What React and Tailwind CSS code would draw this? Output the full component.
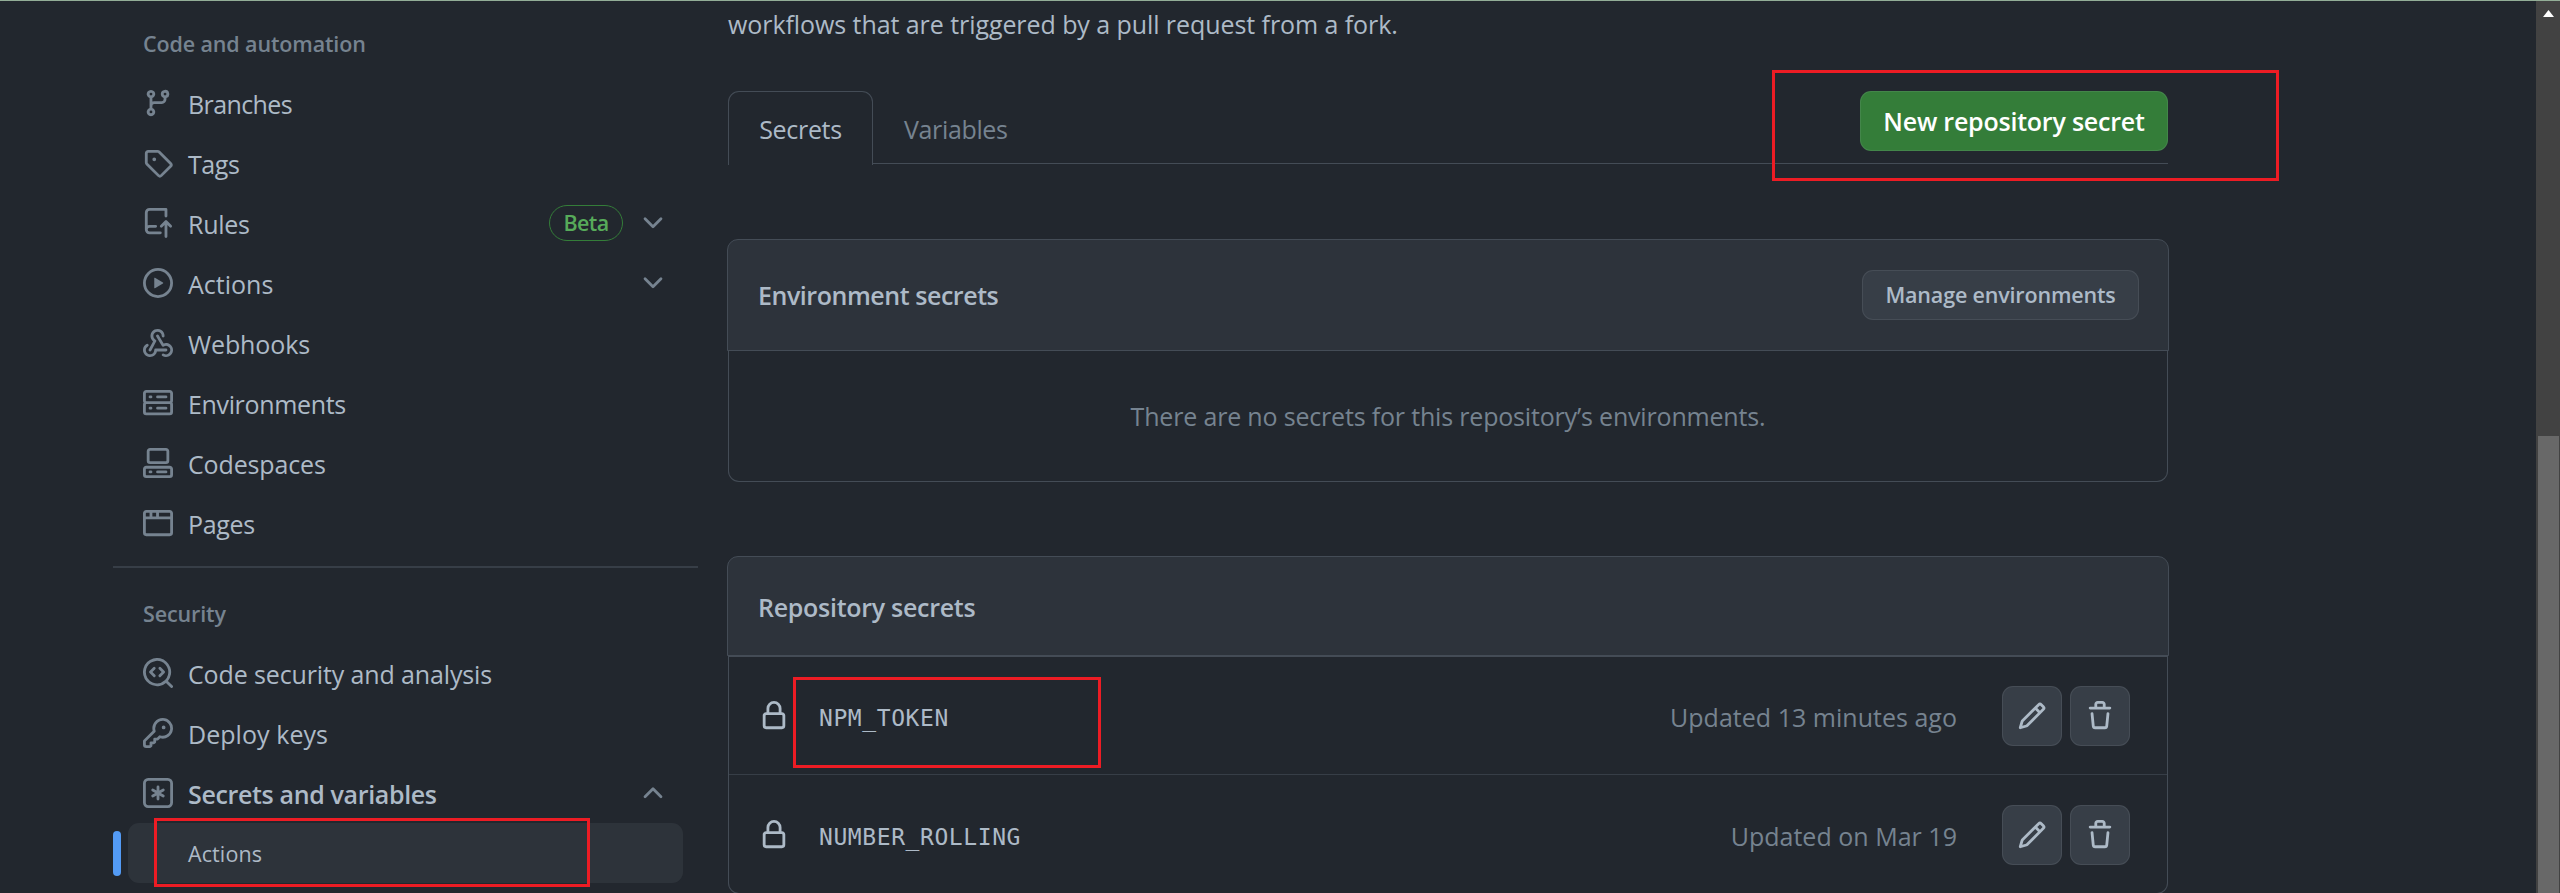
const icons = {
    branch: ['M9.5 3.25a2.25 2.25 0 1 1 3 2.122V6A2.5 2.5 0 0 1 10 8.5H6a1 1 0 0 0-1 1v1.128a2.251 2.251 0 1 1-1.5 0V5.372a2.25 2.25 0 1 1 1.5 0v1.836A2.493 2.493 0 0 1 6 7h4a1 1 0 0 0 1-1v-.628A2.25 2.25 0 0 1 9.5 3.25Zm-6 0a.75.75 0 1 0 1.5 0 .75.75 0 0 0-1.5 0Zm8.25-.75a.75.75 0 1 0 0 1.5.75.75 0 0 0 0-1.5ZM4.25 12a.75.75 0 1 0 0 1.5.75.75 0 0 0 0-1.5Z'],
    tag: ['M1 7.775V2.75C1 1.784 1.784 1 2.75 1h5.025c.464 0 .91.184 1.238.513l6.25 6.25a1.75 1.75 0 0 1 0 2.474l-5.026 5.026a1.75 1.75 0 0 1-2.474 0l-6.25-6.25A1.752 1.752 0 0 1 1 7.775Zm1.5 0c0 .066.026.13.073.177l6.25 6.25a.25.25 0 0 0 .354 0l5.025-5.025a.25.25 0 0 0 0-.354l-6.25-6.25a.25.25 0 0 0-.177-.073H2.75a.25.25 0 0 0-.25.25ZM6 5a1 1 0 1 1 0 2 1 1 0 0 1 0-2Z'],
    repoPush: ['M1 2.5A2.5 2.5 0 0 1 3.5 0h8.75a.75.75 0 0 1 .75.75v3.5a.75.75 0 0 1-1.5 0V1.5h-8a1 1 0 0 0-1 1v6.708A2.493 2.493 0 0 1 3.5 9h3.25a.75.75 0 0 1 0 1.5H3.5a1 1 0 0 0 0 2h5.75a.75.75 0 0 1 0 1.5H3.5A2.5 2.5 0 0 1 1 11.5Zm13.23 7.79h-.001l-1.224-1.224v6.184a.75.75 0 0 1-1.5 0V9.066L10.28 10.29a.75.75 0 0 1-1.06-1.061l2.505-2.504a.75.75 0 0 1 1.06 0L15.29 9.23a.751.751 0 0 1-.018 1.042.751.751 0 0 1-1.042.018Z'],
    play: ['M8 0a8 8 0 1 1 0 16A8 8 0 0 1 8 0ZM1.5 8a6.5 6.5 0 1 0 13 0 6.5 6.5 0 0 0-13 0Zm4.879-2.773 4.264 2.559a.25.25 0 0 1 0 .428l-4.264 2.559A.25.25 0 0 1 6 10.559V5.442a.25.25 0 0 1 .379-.215Z'],
    webhook: [
        'M5.5 4.25a2.25 2.25 0 0 1 4.5 0 .75.75 0 0 0 1.5 0 3.75 3.75 0 1 0-6.14 2.889l-2.272 4.258a.75.75 0 0 0 1.324.706L7 7.25a.75.75 0 0 0-.309-1.015A2.25 2.25 0 0 1 5.5 4.25Z',
        'M7.364 3.607a.75.75 0 0 1 1.03.257l2.608 4.349a3.75 3.75 0 1 1-.628 6.785.75.75 0 0 1 .752-1.299 2.25 2.25 0 1 0-.033-3.88.75.75 0 0 1-1.03-.256L7.107 4.636a.75.75 0 0 1 .257-1.03Z',
        'M2.9 8.776A.75.75 0 0 1 2.625 9.8 2.25 2.25 0 1 0 6 11.75a.75.75 0 0 1 .75-.751h5.5a.75.75 0 0 1 0 1.5H7.425a3.751 3.751 0 1 1-5.55-3.998.75.75 0 0 1 1.024.274Z',
    ],
    server: ['M1.75 1h12.5c.966 0 1.75.784 1.75 1.75v4c0 .372-.116.717-.314 1 .198.283.314.628.314 1v4a1.75 1.75 0 0 1-1.75 1.75H1.75A1.75 1.75 0 0 1 0 12.75v-4c0-.358.109-.707.314-1a1.739 1.739 0 0 1-.314-1v-4C0 1.784.784 1 1.75 1ZM1.5 2.75v4c0 .138.112.25.25.25h12.5a.25.25 0 0 0 .25-.25v-4a.25.25 0 0 0-.25-.25H1.75a.25.25 0 0 0-.25.25Zm.25 5.75a.25.25 0 0 0-.25.25v4c0 .138.112.25.25.25h12.5a.25.25 0 0 0 .25-.25v-4a.25.25 0 0 0-.25-.25ZM7 4.75A.75.75 0 0 1 7.75 4h4.5a.75.75 0 0 1 0 1.5h-4.5A.75.75 0 0 1 7 4.75ZM7.75 10h4.5a.75.75 0 0 1 0 1.5h-4.5a.75.75 0 0 1 0-1.5ZM3 4.75A.75.75 0 0 1 3.75 4h.5a.75.75 0 0 1 0 1.5h-.5A.75.75 0 0 1 3 4.75ZM3.75 10h.5a.75.75 0 0 1 0 1.5h-.5a.75.75 0 0 1 0-1.5Z'],
    codespaces: [
        'M0 11.25c0-.966.784-1.75 1.75-1.75h12.5c.966 0 1.75.784 1.75 1.75v3A1.75 1.75 0 0 1 14.25 16H1.75A1.75 1.75 0 0 1 0 14.25Zm2-9.5C2 .784 2.784 0 3.75 0h8.5C13.216 0 14 .784 14 1.75v5a1.75 1.75 0 0 1-1.75 1.75h-8.5A1.75 1.75 0 0 1 2 6.75Zm1.75-.25a.25.25 0 0 0-.25.25v5c0 .138.112.25.25.25h8.5a.25.25 0 0 0 .25-.25v-5a.25.25 0 0 0-.25-.25Zm-2 9.5a.25.25 0 0 0-.25.25v3c0 .138.112.25.25.25h12.5a.25.25 0 0 0 .25-.25v-3a.25.25 0 0 0-.25-.25Z',
        'M7 12.75a.75.75 0 0 1 .75-.75h4.5a.75.75 0 0 1 0 1.5h-4.5a.75.75 0 0 1-.75-.75Zm-4 0a.75.75 0 0 1 .75-.75h.5a.75.75 0 0 1 0 1.5h-.5a.75.75 0 0 1-.75-.75Z',
    ],
    browser: ['M0 2.75C0 1.784.784 1 1.75 1h12.5c.966 0 1.75.784 1.75 1.75v10.5A1.75 1.75 0 0 1 14.25 15H1.75A1.75 1.75 0 0 1 0 13.25ZM14.5 6h-13v7.25c0 .138.112.25.25.25h12.5a.25.25 0 0 0 .25-.25Zm-6-3.5v2h6V2.75a.25.25 0 0 0-.25-.25ZM5 2.5v2h2v-2Zm-3.25 0a.25.25 0 0 0-.25.25V4.5h2v-2Z'],
    codescan: [
        'M8.47 4.97a.75.75 0 0 0 0 1.06L9.94 7.5 8.47 8.97a.75.75 0 1 0 1.06 1.06l2-2a.75.75 0 0 0 0-1.06l-2-2a.75.75 0 0 0-1.06 0ZM6.53 6.03a.75.75 0 0 0-1.06-1.06l-2 2a.75.75 0 0 0 0 1.06l2 2a.75.75 0 1 0 1.06-1.06L5.06 7.5l1.47-1.47Z',
        'M12.246 13.307a7.501 7.501 0 1 1 1.06-1.06l2.474 2.473a.749.749 0 1 1-1.06 1.06l-2.474-2.473ZM1.5 7.5a6.002 6.002 0 0 0 3.608 5.504 6.002 6.002 0 0 0 6.486-1.117.748.748 0 0 1 .292-.293A6 6 0 1 0 1.5 7.5Z',
    ],
    key: ['M10.5 0a5.499 5.499 0 1 1-1.288 10.848l-.932.932a.749.749 0 0 1-.53.22H7v.75a.749.749 0 0 1-.22.53l-.5.5a.749.749 0 0 1-.53.22H5v.75a.749.749 0 0 1-.22.53l-.5.5a.749.749 0 0 1-.53.22h-2A1.75 1.75 0 0 1 0 14.25v-2c0-.199.079-.389.22-.53l4.932-4.932A5.5 5.5 0 0 1 10.5 0Zm-4 5.5c-.001.431.069.86.205 1.269a.75.75 0 0 1-.181.768L1.5 12.56v1.69c0 .138.112.25.25.25h1.69l.06-.06v-1.19a.75.75 0 0 1 .75-.75h1.19l.06-.06v-1.19a.75.75 0 0 1 .75-.75h1.19l1.023-1.025a.75.75 0 0 1 .768-.18A4 4 0 1 0 6.5 5.5ZM11 6a1 1 0 1 1 0-2 1 1 0 0 1 0 2Z'],
    asterisk: [
        'M0 2.75A2.75 2.75 0 0 1 2.75 0h10.5A2.75 2.75 0 0 1 16 2.75v10.5A2.75 2.75 0 0 1 13.25 16H2.75A2.75 2.75 0 0 1 0 13.25ZM2.75 1.5c-.69 0-1.25.56-1.25 1.25v10.5c0 .69.56 1.25 1.25 1.25h10.5c.69 0 1.25-.56 1.25-1.25V2.75c0-.69-.56-1.25-1.25-1.25Z',
        'M8 4a.75.75 0 0 1 .75.75V6.7l1.69-.975a.75.75 0 0 1 .75 1.3L9.5 8l1.69.976a.75.75 0 0 1-.75 1.298L8.75 9.3v1.951a.75.75 0 0 1-1.5 0V9.299l-1.69.976a.75.75 0 0 1-.75-1.3L6.5 8l-1.69-.975a.75.75 0 0 1 .75-1.3l1.69.976V4.75A.75.75 0 0 1 8 4Z',
    ],
    lock: ['M4 4a4 4 0 0 1 8 0v2h.25c.966 0 1.75.784 1.75 1.75v5.5A1.75 1.75 0 0 1 12.25 15h-8.5A1.75 1.75 0 0 1 2 13.25v-5.5C2 6.784 2.784 6 3.75 6H4Zm8.25 3.5h-8.5a.25.25 0 0 0-.25.25v5.5c0 .138.112.25.25.25h8.5a.25.25 0 0 0 .25-.25v-5.5a.25.25 0 0 0-.25-.25ZM10.5 6V4a2.5 2.5 0 1 0-5 0v2Z'],
    pencil: ['M11.013 1.427a1.75 1.75 0 0 1 2.474 0l1.086 1.086a1.75 1.75 0 0 1 0 2.474l-8.61 8.61c-.21.21-.47.364-.756.445l-3.251.93a.75.75 0 0 1-.927-.928l.929-3.25c.081-.286.235-.547.445-.758l8.61-8.61Zm.176 4.823L9.75 4.81l-6.286 6.287a.253.253 0 0 0-.064.108l-.558 1.953 1.953-.558a.253.253 0 0 0 .108-.064Zm1.238-3.763a.25.25 0 0 0-.354 0L10.811 3.75l1.439 1.44 1.263-1.263a.25.25 0 0 0 0-.354Z'],
    trash: ['M11 1.75V3h2.25a.75.75 0 0 1 0 1.5H2.75a.75.75 0 0 1 0-1.5H5V1.75C5 .784 5.784 0 6.75 0h2.5C10.216 0 11 .784 11 1.75ZM4.496 6.675l.66 6.6a.25.25 0 0 0 .249.225h5.19a.25.25 0 0 0 .249-.225l.66-6.6a.75.75 0 0 1 1.492.149l-.66 6.6A1.748 1.748 0 0 1 10.595 15h-5.19a1.75 1.75 0 0 1-1.741-1.575l-.66-6.6a.75.75 0 1 1 1.492-.15ZM6.5 1.75V3h3V1.75a.25.25 0 0 0-.25-.25h-2.5a.25.25 0 0 0-.25.25Z'],
    down: ['M12.78 5.22a.749.749 0 0 1 0 1.06l-4.25 4.25a.749.749 0 0 1-1.06 0L3.22 6.28a.749.749 0 1 1 1.06-1.06L8 8.939l3.72-3.719a.749.749 0 0 1 1.06 0Z'],
    up: ['M3.22 10.53a.749.749 0 0 1 0-1.06l4.25-4.25a.749.749 0 0 1 1.06 0l4.25 4.25a.749.749 0 1 1-1.06 1.06L8 6.811 4.28 10.53a.749.749 0 0 1-1.06 0Z'],
}

const automation = [
    { label: 'Branches', icon: 'branch', tracking: 'tracking-[-0.6px]' },
    { label: 'Tags', icon: 'tag', tracking: 'tracking-[-0.4px]' },
    { label: 'Rules', icon: 'repoPush', tracking: 'tracking-[-0.3px]', beta: true, chevron: 'down' },
    { label: 'Actions', icon: 'play', tracking: 'tracking-[0px]', chevron: 'down' },
    { label: 'Webhooks', icon: 'webhook', tracking: 'tracking-[-0.1px]' },
    { label: 'Environments', icon: 'server', tracking: 'tracking-[-0.35px]' },
    { label: 'Codespaces', icon: 'codespaces', tracking: 'tracking-[-0.15px]' },
    { label: 'Pages', icon: 'browser', tracking: 'tracking-[-0.3px]' },
]

const security = [
    { label: 'Code security and analysis', icon: 'codescan', tracking: 'tracking-[-0.13px]' },
    { label: 'Deploy keys', icon: 'key', tracking: 'tracking-[0.05px]' },
    { label: 'Secrets and variables', icon: 'asterisk', tracking: 'tracking-[-0.35px] font-semibold', chevron: 'up' },
]

const secrets = [
    { name: 'NPM_TOKEN', updated: 'Updated 13 minutes ago' },
    { name: 'NUMBER_ROLLING', updated: 'Updated on Mar 19' },
]

function Icon({ name, className = '' }) {
    return (
        <svg viewBox="0 0 16 16" fill="currentColor" className={`size-[30px] shrink-0 ${className}`}>
            {icons[name].map((d) => (
                <path key={d} d={d} />
            ))}
        </svg>
    )
}

function NavItem({ label, icon, tracking, beta, chevron }) {
    return (
        <li className="mx-[15px] flex h-[60px] items-center gap-[15px] px-[15px]">
            <Icon name={icon} className="text-[#768390]" />
            <span className={`grow pt-px ${tracking}`}>{label}</span>
            {beta ? (
                <span className="flex h-9 w-[74px] items-center justify-center rounded-full border border-[#347d39] text-[21.5px] font-semibold tracking-[-0.6px] text-[#57ab5a]">
                    Beta
                </span>
            ) : null}
            {chevron ? <Icon name={chevron} className="text-[#768390]" /> : null}
        </li>
    )
}

function NavHeading({ children }) {
    return (
        <h3 className="flex h-[60px] items-center px-[30px] pt-0.5 text-[21.5px] font-semibold tracking-[-0.13px] text-[#768390]">
            {children}
        </h3>
    )
}

function Sidebar() {
    return (
        <aside className="w-[585px] shrink-0 pt-[13px]">
            <NavHeading>Code and automation</NavHeading>
            <ul>
                {automation.map((item) => (
                    <NavItem key={item.label} {...item} />
                ))}
            </ul>
            <div className="mt-[13px] mb-[15px] h-0.5 bg-[#373e47]" />
            <NavHeading>Security</NavHeading>
            <ul>
                {security.map((item) => (
                    <NavItem key={item.label} {...item} />
                ))}
            </ul>
            <div className="flex h-[60px] items-center gap-[7.5px]">
                <span className="h-[45px] w-[7.5px] rounded-full bg-[#539bf5]" />
                <a className="mr-[15px] flex h-full grow items-center rounded-[11px] bg-[#909dab]/10 pt-0.5 pl-[60px] text-[21.5px] tracking-[0.1px]">
                    Actions
                </a>
            </div>
        </aside>
    )
}

function IconButton({ name }) {
    return (
        <button
            type="button"
            className="flex size-[60px] items-center justify-center rounded-[11px] border border-[#cdd9e5]/10 bg-[#373e47]"
        >
            <Icon name={name} />
        </button>
    )
}

function SecretRow({ name, updated }) {
    return (
        <li className="flex h-[118px] border-t border-[#373e47] pt-[30px] pr-[37px] pl-[30px] first:border-[#444c56] first:pt-[29px]">
            <Icon name="lock" className="mt-[15px]" />
            <span className="ml-[30px] grow font-['DejaVu_Sans_Mono',monospace] text-[23px] leading-[64px] tracking-[0.58px]">
                {name}
            </span>
            <span className="mr-[45px] leading-[63px] tracking-[0.02px] text-[#768390]">{updated}</span>
            <div className="flex gap-2">
                <IconButton name="pencil" />
                <IconButton name="trash" />
            </div>
        </li>
    )
}

const panelHeader =
    'mx-[-1px] flex items-center justify-between rounded-t-[11px] border border-[#444c56] bg-[#2d333b] pr-[29px] pl-[30px] font-semibold'

export default function App() {
    return (
        <div className="relative flex h-[893px] w-[2560px] overflow-hidden bg-[#22272e] pl-[113px] font-['Open_Sans',sans-serif] text-[25px] leading-[36px] text-[#adbac7]">
            <Sidebar />
            <main className="ml-[30px] w-[1440px] shrink-0">
                <p className="h-[46px] leading-[48px] tracking-[-0.07px]">
                    workflows that are triggered by a pull request from a fork.
                </p>

                <div className="mt-[45px] flex h-[73px] border-b border-[#444c56]">
                    <a className="flex h-[74px] w-[145px] items-center justify-center rounded-t-[11px] border border-b-0 border-[#444c56] bg-[#22272e] pt-px tracking-[-0.3px]">
                        Secrets
                    </a>
                    <a className="flex h-[74px] grow items-center pt-0.5 pl-[31px] tracking-[-0.35px] text-[#768390]">Variables</a>
                    <button
                        type="button"
                        className="h-[60px] w-[308px] rounded-[11px] border border-[#cdd9e5]/10 bg-[#347d39] font-semibold tracking-[-0.22px] text-white"
                    >
                        New repository secret
                    </button>
                </div>

                <section className="mt-[75px]">
                    <header className={`h-28 tracking-[-0.45px] ${panelHeader}`}>
                        Environment secrets
                        <button
                            type="button"
                            className="h-[50px] w-[277px] rounded-[11px] border border-[#cdd9e5]/10 bg-[#373e47] text-[21.5px] tracking-[-0.17px]"
                        >
                            Manage environments
                        </button>
                    </header>
                    <p className="flex h-[131px] items-center justify-center rounded-b-[11px] border border-t-0 border-[#444c56] tracking-[-0.18px] text-[#768390]">
                        There are no secrets for this repository’s environments.
                    </p>
                </section>

                <section className="mt-[74px]">
                    <header className={`h-[100px] pt-0.5 tracking-[-0.28px] ${panelHeader}`}>Repository secrets</header>
                    <ul className="h-[238px] rounded-b-[11px] border border-t-0 border-[#444c56]">
                        {secrets.map((secret) => (
                            <SecretRow key={secret.name} {...secret} />
                        ))}
                    </ul>
                </section>
            </main>

            {/* scrollbar */}
            <div className="ml-auto w-6 bg-[#424242] pt-[10px] pr-px pl-0.5">
                <svg viewBox="0 0 11 7" className="mx-auto h-[7px] w-[11px] fill-white">
                    <path d="M5.5 0 11 7H0Z" />
                </svg>
                <div className="mt-[419px] h-[460px] bg-[#686868]" />
            </div>

            <div className="absolute inset-x-0 top-0 h-px bg-[#93ae97]" />

            {/* callouts */}
            <div className="absolute top-[70px] left-[1772px] h-[111px] w-[507px] border-3 border-[#ed1c24]" />
            <div className="absolute top-[677px] left-[793px] h-[91px] w-[308px] border-3 border-[#ed1c24]" />
            <div className="absolute top-[818px] left-[154px] h-[69px] w-[436px] border-3 border-[#ed1c24]" />
        </div>
    )
}
